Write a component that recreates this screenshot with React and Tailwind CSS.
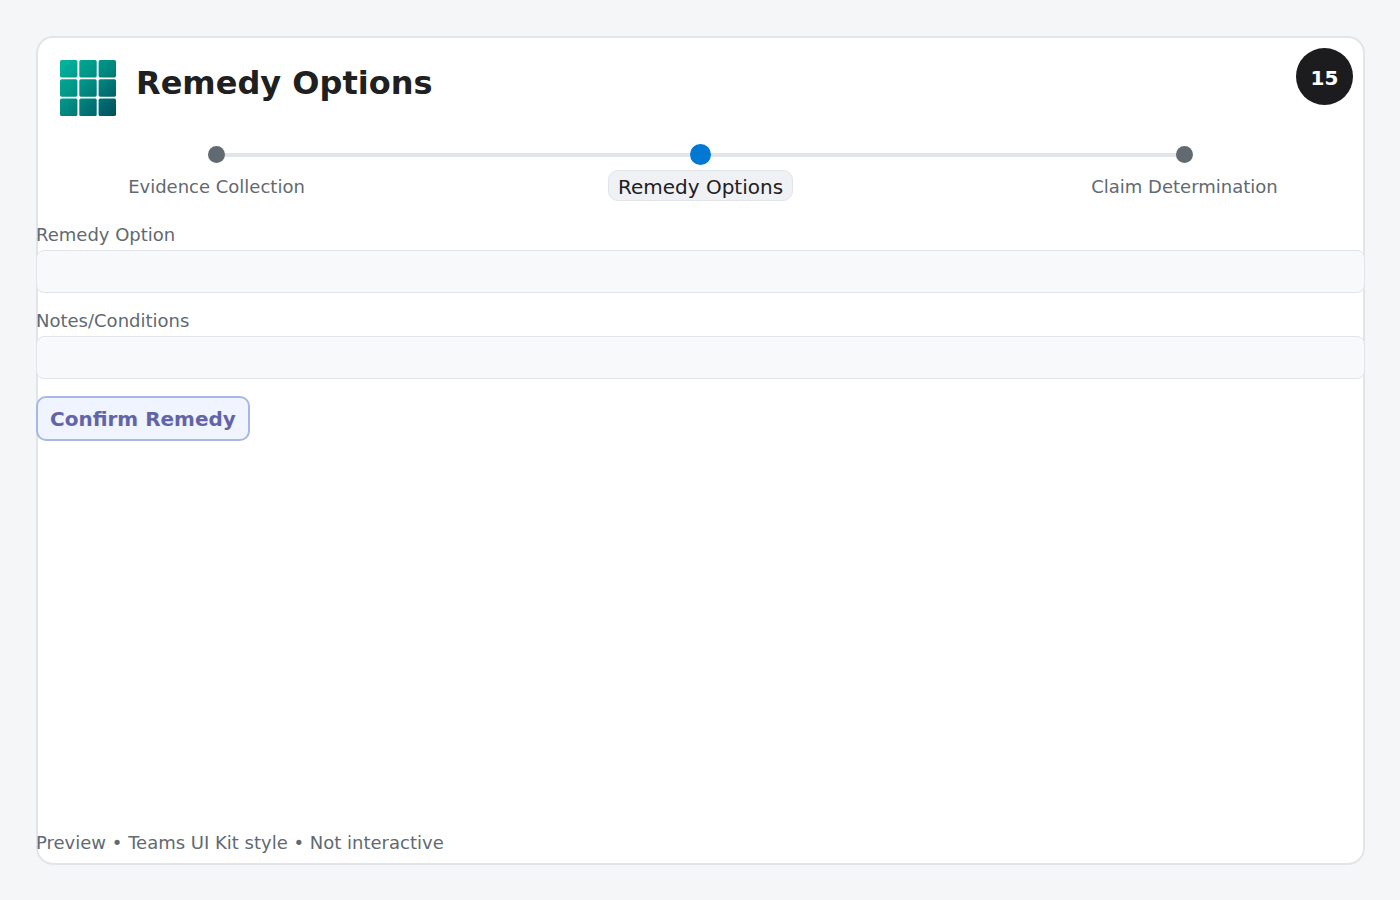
import { useState } from "react";

const steps = [
  { name: "Evidence Collection", active: false },
  { name: "Remedy Options", active: true },
  { name: "Claim Determination", active: false },
];

const fields = [
  { id: "remedyOption", label: "Remedy Option" },
  { id: "notes", label: "Notes/Conditions" },
];

const cells = [0, 19.3, 38.6];

const Logo = () => (
  <svg width="56" height="56" viewBox="0 0 56 56" aria-hidden="true">
    <defs>
      <linearGradient id="tiles" gradientUnits="userSpaceOnUse" x1="0" y1="0" x2="56" y2="56">
        <stop offset="0" stopColor="#00b8a0" />
        <stop offset="0.5" stopColor="#008a80" />
        <stop offset="1" stopColor="#004e60" />
      </linearGradient>
    </defs>
    {cells.map((y) =>
      cells.map((x) => (
        <rect key={`${x}-${y}`} x={x} y={y} width="17.4" height="17.4" rx="1.6" fill="url(#tiles)" />
      ))
    )}
  </svg>
);

const Stepper = () => (
  <ol className="relative flex justify-between px-[84px] mt-7">
    <li aria-hidden="true" className="absolute left-[180px] right-[180px] top-[9px] h-1 bg-[#e1e4e9]" />
    {steps.map((step) => (
      <li key={step.name} className="relative w-[193px] flex flex-col items-center gap-[5px]">
        <span className="h-[21px] flex items-center">
          <span className={step.active ? "size-[21px] rounded-full bg-[#0078d4]" : "size-[17px] rounded-full bg-[#616971]"} />
        </span>
        <span
          className={
            step.active
              ? "h-[31px] w-[185px] pt-0.5 flex items-center justify-center whitespace-nowrap text-[20px] text-[#202020] bg-[#f0f1f5] border border-[#e1e4e9] rounded-[10px]"
              : "h-[31px] pt-0.5 flex items-center whitespace-nowrap text-[18px] text-[#616971]"
          }
        >
          {step.name}
        </span>
      </li>
    ))}
  </ol>
);

const App = () => {
  const [formData, setFormData] = useState({ remedyOption: "", notes: "" });

  const handleChange = (e) => setFormData({ ...formData, [e.target.name]: e.target.value });

  return (
    <div className="min-h-screen flex pt-9 pl-9 pr-[35px] pb-[35px] bg-[#f4f6f8] font-['DejaVu_Sans',sans-serif]">
      <main className="relative flex-1 flex flex-col pt-6 pb-[11px] bg-white rounded-[17px] ring-2 ring-inset ring-[#e1e4e9]">
        <header className="flex gap-5 pl-6">
          <Logo />
          <h1 className="text-[32px] leading-[46px] font-bold text-[#202020]">Remedy Options</h1>
        </header>
        <span className="absolute top-3 right-3 size-[57px] pt-0.5 flex items-center justify-center rounded-full bg-[#1c1c1e] text-white text-[20px] font-bold">
          15
        </span>

        <Stepper />

        <form className="flex flex-col items-start gap-[17px] mt-[23px]" onSubmit={(e) => e.preventDefault()}>
          {fields.map((field) => (
            <div key={field.id} className="w-full flex flex-col gap-1">
              <label htmlFor={field.id} className="text-[18px] leading-[22px] text-[#616971]">{field.label}</label>
              <input
                type="text"
                id={field.id}
                name={field.id}
                value={formData[field.id]}
                onChange={handleChange}
                className="w-full h-[43px] px-3 text-[18px] text-[#202020] bg-[#f8f9fb] border border-[#e1e4e9] rounded-lg"
              />
            </div>
          ))}
          <button type="submit" className="h-[45px] px-3 text-[20px] font-bold text-[#6264a7] bg-[#f0f4ff] border-2 border-[#a8b8e4] rounded-[10px]">
            Confirm Remedy
          </button>
        </form>

        <footer className="mt-auto text-[18px] leading-[22px] text-[#616971]">
          Preview • Teams UI Kit style • Not interactive
        </footer>
      </main>
    </div>
  );
};

export default App;
